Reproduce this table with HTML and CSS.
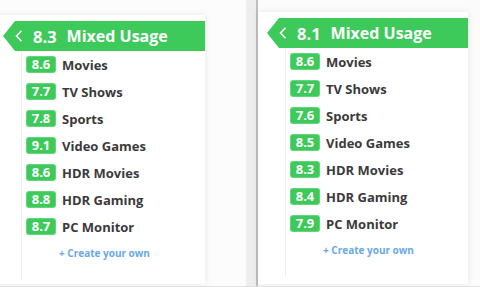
FILE: index.html
```html
<!DOCTYPE html>
<html>
<head>
<meta charset="utf-8">
<link rel="stylesheet" href="styles.css">
</head>
<body>
  <div class="pane pane-left">
    <div class="card card-left">
      <div class="header">
        <svg class="chev" width="8" height="12" viewBox="0 0 8 12"><polyline points="6.5,0.8 1.5,6 6.5,11.2" fill="none" stroke="#fff" stroke-width="1.6"/></svg>
        <span class="hscore">8.3</span>
        <span class="htitle">Mixed Usage</span>
      </div>
      <div class="list">
        <div class="row"><span class="badge">8.6</span><span class="label">Movies</span></div>
        <div class="row"><span class="badge">7.7</span><span class="label">TV Shows</span></div>
        <div class="row"><span class="badge">7.8</span><span class="label">Sports</span></div>
        <div class="row"><span class="badge">9.1</span><span class="label">Video Games</span></div>
        <div class="row"><span class="badge">8.6</span><span class="label">HDR Movies</span></div>
        <div class="row"><span class="badge">8.8</span><span class="label">HDR Gaming</span></div>
        <div class="row"><span class="badge">8.7</span><span class="label">PC Monitor</span></div>
        <div class="create">+ Create your own</div>
      </div>
    </div>
  </div>
  <div class="divider"></div>
  <div class="pane pane-right">
    <div class="card card-right">
      <div class="header">
        <svg class="chev" width="8" height="12" viewBox="0 0 8 12"><polyline points="6.5,0.8 1.5,6 6.5,11.2" fill="none" stroke="#fff" stroke-width="1.6"/></svg>
        <span class="hscore">8.1</span>
        <span class="htitle">Mixed Usage</span>
      </div>
      <div class="list">
        <div class="row"><span class="badge">8.6</span><span class="label">Movies</span></div>
        <div class="row"><span class="badge">7.7</span><span class="label">TV Shows</span></div>
        <div class="row"><span class="badge">7.6</span><span class="label">Sports</span></div>
        <div class="row"><span class="badge">8.5</span><span class="label">Video Games</span></div>
        <div class="row"><span class="badge">8.3</span><span class="label">HDR Movies</span></div>
        <div class="row"><span class="badge">8.4</span><span class="label">HDR Gaming</span></div>
        <div class="row"><span class="badge">7.9</span><span class="label">PC Monitor</span></div>
        <div class="create">+ Create your own</div>
      </div>
    </div>
  </div>
</body>
</html>
```
FILE: styles.css
```css
* { box-sizing: border-box; }
html, body { margin: 0; padding: 0; }
body {
  width: 480px;
  height: 287px;
  overflow: hidden;
  display: flex;
  background: #fbfbfb;
  font-family: "Open Sans", "Liberation Sans", sans-serif;
  border-bottom: 1px solid #e2e2e2;
}
.pane {
  display: flex;
  flex-direction: column;
  padding-bottom: 2px;
}
.pane-left {
  width: 246px;
  padding-top: 15px;
  background: #fcfcfc;
}
.pane-right {
  flex: 1;
  padding-top: 12px;
  background: #fbfbfb;
}
.divider {
  width: 12px;
  background: #eeeeee;
  border-right: 2px solid #bfbfbf;
}
.card {
  flex: 1;
  background: #fff;
  box-shadow: 0 0 7px rgba(0, 0, 0, 0.09);
  display: flex;
  flex-direction: column;
}
.card-left {
  margin-left: -6px;
  width: 211px;
}
.card-right {
  width: 210px;
}
.header {
  margin-top: 6px;
  margin-left: 9px;
  height: 30px;
  background: #3dca5a;
  clip-path: polygon(12px 0, 100% 0, 100% 100%, 12px 100%, 0 50%);
  display: flex;
  align-items: center;
  color: #fff;
  font-weight: 700;
  font-size: 16px;
  padding-left: 12px;
}
.chev { display: block; flex: none; }
.hscore { margin-left: 10px; font-size: 16.5px; }
.htitle { margin-left: 10px; }
.list {
  margin-left: 27px;
  border-left: 1px solid #f0f0f0;
  padding-left: 5px;
  padding-bottom: 14px;
  display: flex;
  flex-direction: column;
}
.row {
  height: 27px;
  display: flex;
  align-items: center;
}
.badge {
  width: 28px;
  height: 15px;
  background: #3dca5a;
  border-radius: 2px;
  color: #fff;
  font-weight: 700;
  font-size: 13px;
  line-height: 15px;
  text-align: center;
  box-shadow: 0 0 0 1px #63d67c;
}
.label {
  margin-left: 7px;
  color: #3a3a3a;
  font-weight: 700;
  font-size: 13px;
}
.create {
  height: 26px;
  display: flex;
  align-items: center;
  padding-left: 32px;
  color: #68a9e6;
  font-weight: 700;
  font-size: 10px;
}
```
